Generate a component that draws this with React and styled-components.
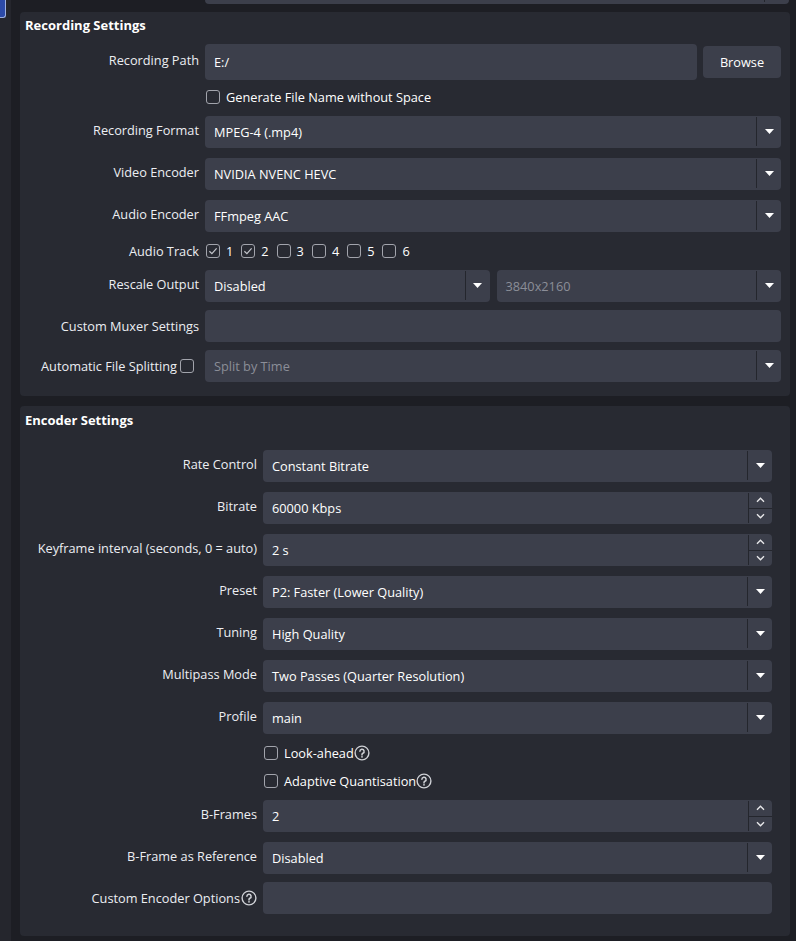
import React from "react";
import styled, { createGlobalStyle } from "styled-components";

const GlobalStyle = createGlobalStyle`
  html, body {
    margin: 0;
    padding: 0;
    background: #1d1e24;
  }
  body {
    font-family: "Open Sans", "Noto Sans", "DejaVu Sans", sans-serif;
    font-size: 12.75px;
    color: #ffffff;
  }
`;

const Page = styled.div`
  display: flex;
  width: 796px;
  height: 941px;
  overflow: hidden;
  background: #1d1e24;
`;

const Sidebar = styled.div`
  width: 11px;
  flex: none;
  background: #25262d;
`;

const SideTab = styled.div`
  width: 6px;
  height: 18px;
  box-sizing: border-box;
  background: #2c4aa8;
  border-right: 1px solid #9eb0e0;
  border-bottom: 1px solid #9eb0e0;
  border-radius: 0 0 3px 0;
`;

const Scroll = styled.div`
  flex: 1;
  display: flex;
  flex-direction: column;
  padding: 0 6px 0 9px;
  & > * {
    flex-shrink: 0;
  }
`;

const TopStub = styled.div`
  height: 4px;
  overflow: hidden;
  display: flex;
  align-items: flex-end;
  padding: 0 1px 0 185px;
  margin-bottom: 8px;
`;

const Panel = styled.section`
  background: #282a32;
  border-radius: 4px;
  padding: ${p => p.$pt}px ${p => p.$pr}px ${p => p.$pb}px 9px;
  margin-bottom: 10px;
`;

const Title = styled.h2`
  margin: 0 0 0 -4px;
  font-size: 13px;
  line-height: 16px;
  font-weight: 700;
  color: #ffffff;
`;

const Form = styled.div`
  display: flex;
  flex-direction: column;
  margin-top: ${p => p.$mt}px;
  & > * {
    flex-shrink: 0;
  }
`;

const Row = styled.div`
  display: grid;
  grid-template-columns: ${p => p.$lw}px 1fr;
  column-gap: 6px;
  align-items: center;
  height: ${p => p.$h || 32}px;
  margin-top: ${p => p.$mt || 0}px;
`;

const Label = styled.div`
  display: flex;
  align-items: center;
  justify-content: flex-end;
  gap: 1px;
  white-space: nowrap;
  color: #eceef2;
  line-height: 16px;
  padding-bottom: ${p => (p.$raised ? 4 : 0)}px;
`;

const Field = styled.div`
  display: flex;
  align-items: center;
  gap: 6px;
  min-width: 0;
`;

const Pair = styled.div`
  display: grid;
  grid-template-columns: 1fr 1fr;
  gap: 7px;
`;

const Box = styled.div`
  flex: 1;
  display: flex;
  align-items: stretch;
  height: ${p => p.$h || 32}px;
  box-sizing: border-box;
  background: #3c3f4b;
  border-radius: 4px;
  min-width: 0;
`;

const Value = styled.div`
  flex: 1;
  display: flex;
  align-items: center;
  padding-left: 9px;
  color: ${p => (p.$disabled ? "#8b8e98" : "#ffffff")};
  white-space: nowrap;
  overflow: hidden;
`;

const DropButton = styled.div`
  width: 24px;
  flex: none;
  display: flex;
  align-items: center;
  justify-content: center;
  border-left: 1px solid #24262d;
  margin: 1px 0 2px;
`;

const SpinButtons = styled.div`
  width: 23px;
  flex: none;
  display: flex;
  flex-direction: column;
  border-left: 1px solid #24262d;
  margin: 1px 0;
`;

const SpinHalf = styled.div`
  flex: 1;
  display: flex;
  align-items: center;
  justify-content: center;
  & + & {
    border-top: 1px solid #24262d;
  }
`;

const Button = styled.div`
  width: 78px;
  height: 32px;
  flex: none;
  display: flex;
  align-items: center;
  justify-content: center;
  background: #3c3f4b;
  border-radius: 4px;
  color: #ffffff;
`;

const Check = styled.span`
  width: 14px;
  height: 14px;
  flex: none;
  box-sizing: border-box;
  border: 1px solid #a2a4ac;
  border-radius: 3px;
  display: inline-flex;
  align-items: center;
  justify-content: center;
  margin-left: ${p => p.$ml || 0}px;
  margin-right: ${p => p.$mr || 0}px;
`;

const CheckItem = styled.label`
  display: inline-flex;
  align-items: center;
  gap: 6px;
  padding-left: 1px;
  color: #ffffff;
  white-space: nowrap;
`;

const Tracks = styled.div`
  display: flex;
  gap: 7px;
`;

const HelpWrap = styled.span`
  display: inline-flex;
  margin-left: -6px;
`;

const Arrow = () => (
  <svg width="9" height="5" viewBox="0 0 9 5">
    <path d="M0 0h9L4.5 5z" fill="#ffffff" />
  </svg>
);

const Chevron = ({ down }) => (
  <svg width="9" height="6" viewBox="0 0 9 6">
    <path
      d={down ? "M1 1.2 4.5 4.7 8 1.2" : "M1 4.8 4.5 1.3 8 4.8"}
      stroke="#e8e8ea"
      strokeWidth="1.4"
      fill="none"
    />
  </svg>
);

const Help = () => (
  <svg width="16" height="16" viewBox="0 0 16 16">
    <circle cx="8" cy="8" r="6.9" stroke="#cfd1d6" strokeWidth="1.4" fill="none" />
    <path
      d="M5.9 6.3a2.1 2.1 0 1 1 3 1.9c-.55.25-.9.65-.9 1.2v.7"
      stroke="#cfd1d6"
      strokeWidth="1.5"
      fill="none"
      strokeLinecap="round"
    />
    <circle cx="8" cy="11.8" r="0.9" fill="#cfd1d6" />
  </svg>
);

const CheckBox = ({ checked, ml, mr }) => (
  <Check $ml={ml} $mr={mr}>
    {checked && (
      <svg width="12" height="12" viewBox="0 0 12 12">
        <path d="M2.4 6.2 4.9 8.6 9.6 3.4" stroke="#c4c6cc" strokeWidth="1.2" fill="none" />
      </svg>
    )}
  </Check>
);

const Combo = ({ value, disabled }) => (
  <Box>
    <Value $disabled={disabled}>{value}</Value>
    <DropButton>
      <Arrow />
    </DropButton>
  </Box>
);

const Spin = ({ value }) => (
  <Box>
    <Value>{value}</Value>
    <SpinButtons>
      <SpinHalf>
        <Chevron />
      </SpinHalf>
      <SpinHalf>
        <Chevron down />
      </SpinHalf>
    </SpinButtons>
  </Box>
);

const Input = ({ value, h }) => (
  <Box $h={h}>
    <Value>{value}</Value>
  </Box>
);

const REC_W = 170;
const ENC_W = 228;

const App = () => (
  <>
    <GlobalStyle />
    <Page>
      <Sidebar>
        <SideTab />
      </Sidebar>
      <Scroll>
        <TopStub>
          <Combo value="" />
        </TopStub>

        <Panel $pt={5} $pr={9} $pb={14}>
          <Title>Recording Settings</Title>
          <Form $mt={11}>
            <Row $lw={REC_W} $h={36}>
              <Label $raised>Recording Path</Label>
              <Field>
                <Input value="E:/" h={36} />
                <Button>Browse</Button>
              </Field>
            </Row>
            <Row $lw={REC_W} $h={34}>
              <span />
              <Field>
                <CheckItem>
                  <CheckBox />
                  Generate File Name without Space
                </CheckItem>
              </Field>
            </Row>
            <Row $lw={REC_W} $mt={2}>
              <Label $raised>Recording Format</Label>
              <Combo value="MPEG-4 (.mp4)" />
            </Row>
            <Row $lw={REC_W} $mt={10}>
              <Label $raised>Video Encoder</Label>
              <Combo value="NVIDIA NVENC HEVC" />
            </Row>
            <Row $lw={REC_W} $mt={10}>
              <Label $raised>Audio Encoder</Label>
              <Combo value="FFmpeg AAC" />
            </Row>
            <Row $lw={REC_W} $h={38}>
              <Label>Audio Track</Label>
              <Tracks>
                {[1, 2, 3, 4, 5, 6].map(n => (
                  <CheckItem key={n}>
                    <CheckBox checked={n <= 2} />
                    {n}
                  </CheckItem>
                ))}
              </Tracks>
            </Row>
            <Row $lw={REC_W}>
              <Label $raised>Rescale Output</Label>
              <Pair>
                <Combo value="Disabled" />
                <Combo value="3840x2160" disabled />
              </Pair>
            </Row>
            <Row $lw={REC_W} $mt={8}>
              <Label>Custom Muxer Settings</Label>
              <Input value="" />
            </Row>
            <Row $lw={REC_W} $mt={8}>
              <Label>
                Automatic File Splitting
                <CheckBox ml={2} mr={5} />
              </Label>
              <Combo value="Split by Time" disabled />
            </Row>
          </Form>
        </Panel>

        <Panel $pt={6} $pr={18} $pb={22}>
          <Title>Encoder Settings</Title>
          <Form $mt={22}>
            <Row $lw={ENC_W}>
              <Label $raised>Rate Control</Label>
              <Combo value="Constant Bitrate" />
            </Row>
            <Row $lw={ENC_W} $mt={10}>
              <Label $raised>Bitrate</Label>
              <Spin value="60000 Kbps" />
            </Row>
            <Row $lw={ENC_W} $mt={10}>
              <Label $raised>Keyframe interval (seconds, 0 = auto)</Label>
              <Spin value="2 s" />
            </Row>
            <Row $lw={ENC_W} $mt={10}>
              <Label $raised>Preset</Label>
              <Combo value="P2: Faster (Lower Quality)" />
            </Row>
            <Row $lw={ENC_W} $mt={10}>
              <Label $raised>Tuning</Label>
              <Combo value="High Quality" />
            </Row>
            <Row $lw={ENC_W} $mt={10}>
              <Label $raised>Multipass Mode</Label>
              <Combo value="Two Passes (Quarter Resolution)" />
            </Row>
            <Row $lw={ENC_W} $mt={10}>
              <Label $raised>Profile</Label>
              <Combo value="main" />
            </Row>
            <Row $lw={ENC_W} $mt={5} $h={28}>
              <span />
              <Field>
                <CheckItem>
                  <CheckBox />
                  <span>Look-ahead</span>
                </CheckItem>
                <HelpWrap>
                  <Help />
                </HelpWrap>
              </Field>
            </Row>
            <Row $lw={ENC_W} $h={28}>
              <span />
              <Field>
                <CheckItem>
                  <CheckBox />
                  <span>Adaptive Quantisation</span>
                </CheckItem>
                <HelpWrap>
                  <Help />
                </HelpWrap>
              </Field>
            </Row>
            <Row $lw={ENC_W} $mt={5}>
              <Label $raised>B-Frames</Label>
              <Spin value="2" />
            </Row>
            <Row $lw={ENC_W} $mt={10}>
              <Label $raised>B-Frame as Reference</Label>
              <Combo value="Disabled" />
            </Row>
            <Row $lw={ENC_W} $mt={8}>
              <Label>
                Custom Encoder Options
                <Help />
              </Label>
              <Input value="" />
            </Row>
          </Form>
        </Panel>
      </Scroll>
    </Page>
  </>
);

export default App;
